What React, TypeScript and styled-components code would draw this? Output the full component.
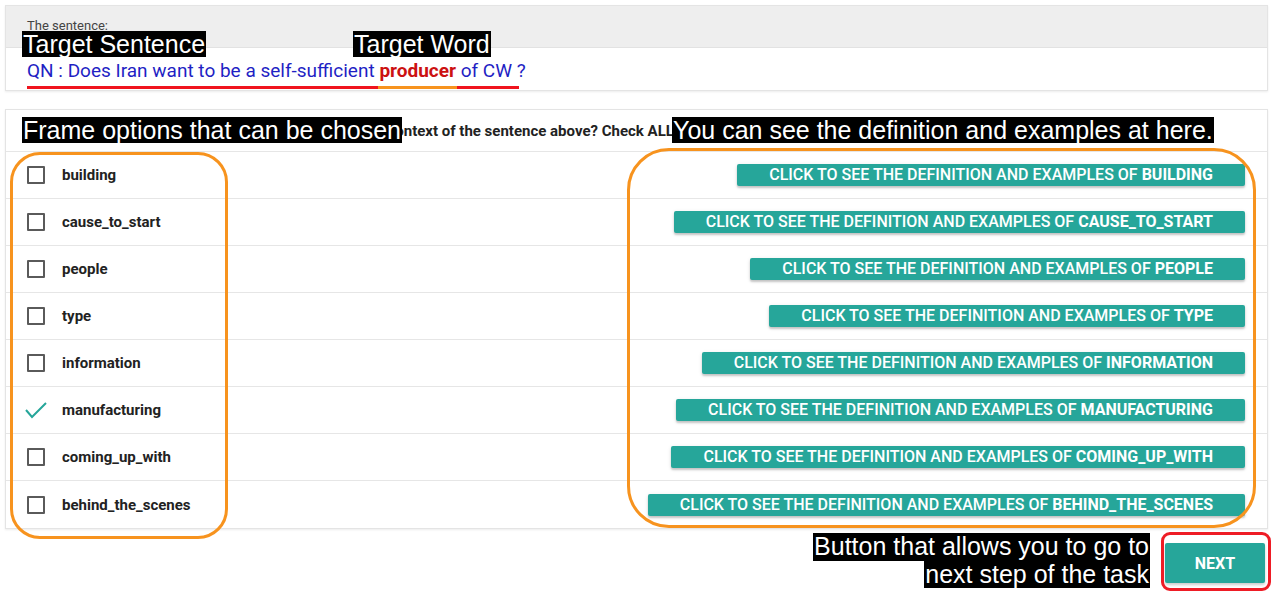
import React from "react";
import styled, { createGlobalStyle } from "styled-components";

const frames = [
  { name: "building", checked: false },
  { name: "cause_to_start", checked: false },
  { name: "people", checked: false },
  { name: "type", checked: false },
  { name: "information", checked: false },
  { name: "manufacturing", checked: true },
  { name: "coming_up_with", checked: false },
  { name: "behind_the_scenes", checked: false },
];

const GlobalStyle = createGlobalStyle`
  body {
    margin: 0;
    background: #ffffff;
    font-family: Roboto, "Liberation Sans", sans-serif;
  }
`;

const Page = styled.div`
  position: relative;
  width: 1276px;
  height: 600px;
  padding: 5px 8px 0 5px;
  box-sizing: border-box;
  overflow: hidden;
`;

const Card = styled.section`
  background: #fff;
  border: 1px solid #e4e4e4;
  box-shadow: 0 1px 2px rgba(0, 0, 0, 0.08);
`;

const SentenceHeader = styled.div`
  height: 42px;
  background: #eeeeee;
  border-bottom: 1px solid #e2e2e2;
  padding: 12px 0 0 21px;
  box-sizing: border-box;
  font-size: 13px;
  color: #444;
`;

const SentenceBody = styled.div`
  height: 42px;
  padding: 11px 0 0 21px;
  box-sizing: border-box;
  font-size: 19px;
  color: #1f1fc4;
`;

const Target = styled.b`
  color: #cc1111;
  font-weight: 700;
`;

const FrameCard = styled(Card)`
  margin-top: 18px;
`;

const FrameHeader = styled.div`
  height: 41px;
  padding: 0 21px;
  display: flex;
  align-items: center;
  font-size: 15px;
  font-weight: 700;
  color: #222;
  white-space: nowrap;
  overflow: hidden;
  border-bottom: 1px solid #e6e6e6;
`;

const Row = styled.div`
  height: 47px;
  display: flex;
  align-items: center;
  padding: 0 22px 0 21px;
  box-sizing: border-box;
  border-bottom: 1px solid #e6e6e6;
  &:last-child {
    border-bottom: none;
  }
`;

const Box = styled.span`
  width: 18px;
  height: 18px;
  box-sizing: border-box;
  border: 2px solid #5a5a5a;
  border-radius: 1px;
  flex: none;
`;

const Tick = styled.svg`
  width: 24px;
  height: 20px;
  margin-left: -3px;
  margin-right: -3px;
  flex: none;
`;

const Label = styled.span`
  margin-left: 17px;
  font-size: 15px;
  font-weight: 700;
  color: #222;
`;

const DefButton = styled.button`
  margin-left: auto;
  height: 22px;
  padding: 0 32px;
  border: none;
  border-radius: 2px;
  background: #26a69a;
  color: #fff;
  font-family: Roboto, "Liberation Sans", sans-serif;
  font-size: 16px;
  font-weight: 500;
  line-height: 22px;
  text-transform: uppercase;
  box-shadow: 0 2px 2px rgba(0, 0, 0, 0.18), 0 1px 4px rgba(0, 0, 0, 0.1);
  white-space: nowrap;
  b {
    font-weight: 700;
  }
`;

const Footer = styled.div`
  display: flex;
  justify-content: flex-end;
  padding: 14px 3px 0 0;
`;

const NextButton = styled.button`
  width: 100px;
  height: 40px;
  border: none;
  border-radius: 2px;
  background: #26a69a;
  color: #fff;
  font-family: Roboto, "Liberation Sans", sans-serif;
  font-size: 16px;
  font-weight: 700;
  box-shadow: 0 2px 3px rgba(0, 0, 0, 0.2);
`;

/* annotation layer drawn over the screenshot */
const Note = styled.div<{ x: number; y: number }>`
  position: absolute;
  left: ${(p) => p.x}px;
  top: ${(p) => p.y}px;
  background: #000;
  color: #fff;
  font-family: "Liberation Sans", Arial, sans-serif;
  font-size: 25px;
  line-height: 26px;
  padding: 0 1px;
  white-space: nowrap;
`;

const NoteStack = styled.div`
  position: absolute;
  right: 126px;
  top: 533px;
  display: flex;
  flex-direction: column;
  align-items: flex-end;
  font-family: "Liberation Sans", Arial, sans-serif;
  font-size: 25px;
  line-height: 27.5px;
  color: #fff;
  span {
    background: #000;
    padding: 0 1px;
    white-space: nowrap;
  }
`;

const Outline = styled.div<{ x: number; y: number; w: number; h: number; r: number; c: string }>`
  position: absolute;
  left: ${(p) => p.x}px;
  top: ${(p) => p.y}px;
  width: ${(p) => p.w}px;
  height: ${(p) => p.h}px;
  border: 3px solid ${(p) => p.c};
  border-radius: ${(p) => p.r}px;
  box-sizing: border-box;
  pointer-events: none;
`;

const Underline = styled.div`
  position: absolute;
  left: 27px;
  top: 86px;
  width: 492px;
  height: 3px;
  background: linear-gradient(
    to right,
    #f0141e 0,
    #f0141e 351px,
    #f7931e 351px,
    #f7931e 430px,
    #f0141e 430px
  );
`;

export default function App() {
  return (
    <Page>
      <GlobalStyle />
      <Card>
        <SentenceHeader>The sentence:</SentenceHeader>
        <SentenceBody>
          QN : Does Iran want to be a self-sufficient <Target>producer</Target> of CW ?
        </SentenceBody>
      </Card>

      <FrameCard>
        <FrameHeader>
          Which of the following frames are appropriate for the context of the sentence above? Check ALL that apply.
        </FrameHeader>
        {frames.map((f) => (
          <Row key={f.name}>
            {f.checked ? (
              <Tick viewBox="0 0 24 20">
                <polyline points="2,10 8,17 22,3" fill="none" stroke="#26a69a" strokeWidth="2" />
              </Tick>
            ) : (
              <Box />
            )}
            <Label>{f.name}</Label>
            <DefButton>
              Click to see the definition and examples of <b>{f.name}</b>
            </DefButton>
          </Row>
        ))}
      </FrameCard>

      <Footer>
        <NextButton>NEXT</NextButton>
      </Footer>

      <Underline />
      <Note x={22} y={31}>Target Sentence</Note>
      <Note x={353} y={31}>Target Word</Note>
      <Note x={22} y={117}>Frame options that can be chosen</Note>
      <Note x={672} y={117}>You can see the definition and examples at here.</Note>
      <NoteStack>
        <span>Button that allows you to go to</span>
        <span>next step of the task</span>
      </NoteStack>
      <Outline x={10} y={152} w={218} h={387} r={30} c="#f7931e" />
      <Outline x={627} y={148} w={629} h={380} r={42} c="#f7931e" />
      <Outline x={1161} y={532} w={110} h={59} r={9} c="#ee1c25" />
    </Page>
  );
}
